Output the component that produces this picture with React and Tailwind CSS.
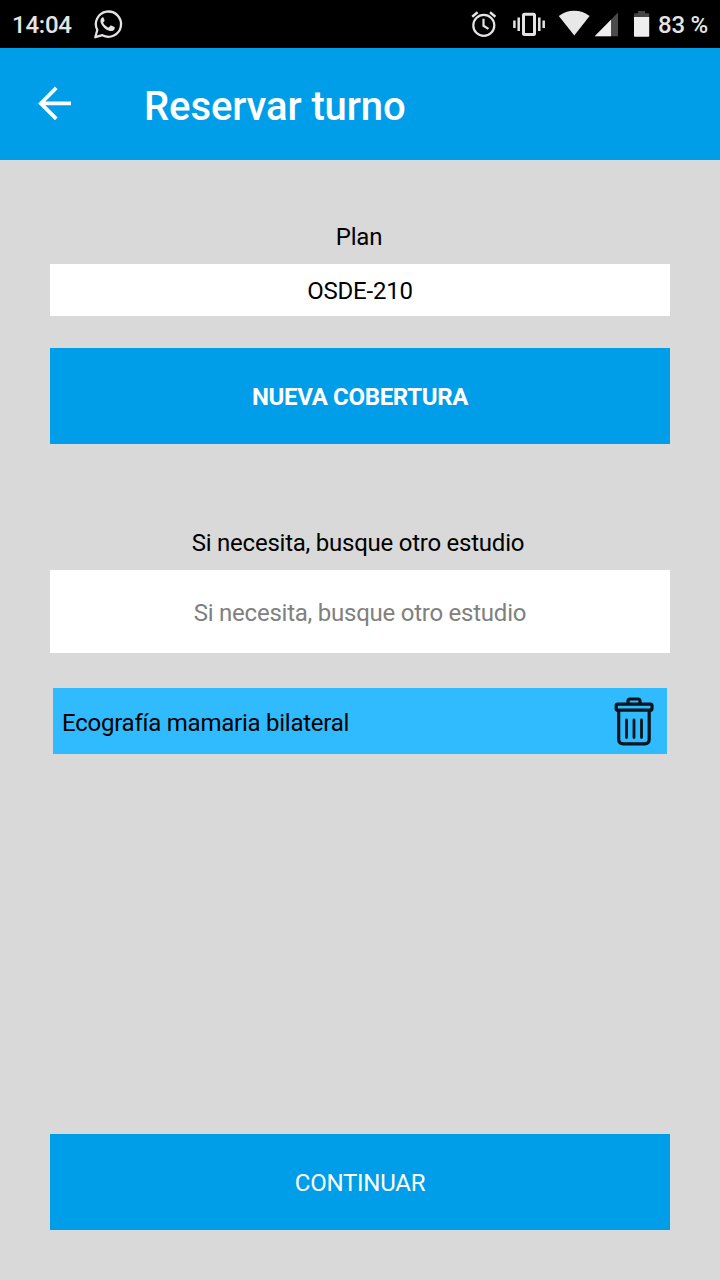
function WhatsAppIcon() {
  return (
    <svg className="ml-5 h-8 w-8 shrink-0" viewBox="92 8 32 32" fill="none">
      <path d="M95.3 37.2 97.3 30A12.6 12.6 0 1 1 102.4 35.2Z" stroke="#e4e4e4" strokeWidth="2.3" strokeLinejoin="round" />
      <path d="M103.4 17.5c-.5-.4-1.3-.2-1.8.4-1.2 1.3-1.5 3.1-.7 5.1 1.6 4 5.2 7.1 9.1 8 2.5.5 4.6-.9 4.8-3.1 0-.4-.2-.7-.5-.9l-3-1.5c-.4-.2-.8-.1-1 .2l-1.3 1.6c-.3.3-.6.3-1 .1-2-.9-3.6-2.3-4.7-4.3-.2-.4-.2-.6.1-.9l1-1.3c.2-.3.2-.6.1-.9l-1.1-2.5Z" fill="#e4e4e4" />
    </svg>
  );
}

function AlarmIcon() {
  return (
    <svg className="h-8 w-7 shrink-0" viewBox="470 8 28 32" fill="none" stroke="#e4e4e4" strokeWidth="2.2">
      <circle cx="483.8" cy="25.4" r="10.5" />
      <path d="M483.5 18.8v7l5 3.1" />
      <path d="m472.2 16.7 5.4-4.4M495.4 16.7l-5.4-4.4" strokeWidth="2.5" />
    </svg>
  );
}

function VibrateIcon() {
  return (
    <svg className="ml-3.5 h-8 w-9 shrink-0" viewBox="512 8 36 32" fill="none" stroke="#e4e4e4">
      <rect x="523.5" y="14.3" width="11" height="20.2" rx="1" strokeWidth="3" />
      <path d="M514.4 20.5v7.5M518.7 17.5v13.5M539.3 17.5v13.5M543.7 20.5v7.5" strokeWidth="2.5" />
    </svg>
  );
}

function WifiIcon() {
  return (
    <svg className="ml-2.5 h-8 w-8 shrink-0" viewBox="558 8 32 32">
      <path d="M558.8 16.1a25 25 0 0 1 30.8 0L574.3 35.5Z" fill="#e8e8e8" />
    </svg>
  );
}

function SignalIcon() {
  return (
    <svg className="ml-1 h-8 w-6 shrink-0" viewBox="594 8 24 32">
      <path d="M618 12.5V36.2h-23.3Z" fill="#4b4b4b" />
      <path d="M611 19.7V36.2h-16.3Z" fill="#eeeeee" />
    </svg>
  );
}

function BatteryIcon() {
  return (
    <svg className="ml-4 h-8 w-4 shrink-0" viewBox="634 8 16 32">
      <path d="M638 11h7v2.3h3.2q1 0 1 1V17h-15.2v-2.7q0-1 1-1h3Z" fill="#444444" />
      <path d="M634 17h15.2v19q0 .8-.8.8h-13.6q-.8 0-.8-.8Z" fill="#eeeeee" />
    </svg>
  );
}

function StatusBar() {
  return (
    <div className="flex h-12 items-center bg-black px-3 font-medium tracking-[-0.01em] text-[#e4e4e4]">
      <span className="w-15 pt-0.5 whitespace-nowrap">14:04</span>
      <WhatsAppIcon />
      <div className="ml-auto flex items-center">
        <AlarmIcon />
        <VibrateIcon />
        <WifiIcon />
        <SignalIcon />
        <BatteryIcon />
        <span className="ml-2 w-[50px] pt-0.5 whitespace-nowrap">83 %</span>
      </div>
    </div>
  );
}

function TopBar() {
  return (
    <header className="flex h-28 items-center bg-[#009ee8] pl-[37px] text-white">
      <button aria-label="Volver" className="mb-0.5 h-9 w-9">
        <svg className="h-9 w-9" viewBox="37 85 36 36" fill="none" stroke="currentColor" strokeWidth="3.7">
          <path d="M71 103.4H41M56.3 87.9 40.8 103.4 56.3 118.9" />
        </svg>
      </button>
      <h1 className="ml-[71px] pt-[5px] text-[40px] leading-none font-medium tracking-[-0.1px]">Reservar turno</h1>
    </header>
  );
}

function TrashIcon() {
  return (
    <svg className="h-[52px] w-11" viewBox="612 695 44 52" fill="none" stroke="#07141c" strokeWidth="3.2" strokeLinecap="round" strokeLinejoin="round">
      <rect x="616.2" y="704.2" width="35.8" height="6" rx="1.5" />
      <path d="M628 703.5v-2.5q0-2 2-2h8q2 0 2 2v2.5" />
      <path d="M618.7 711v28.3q0 4.5 4.5 4.5h21.5q4.5 0 4.5-4.5V711" />
      <path d="M626.5 720v17.5M634 720v17.5M641.5 720v17.5" strokeWidth="2.8" />
    </svg>
  );
}

export default function App() {
  return (
    <div className="flex h-[1280px] w-[720px] flex-col bg-[#d9d9d9] font-['Roboto',sans-serif] text-2xl text-black">
      <StatusBar />
      <TopBar />
      <main className="flex flex-1 flex-col px-[50px] pt-[61px] pb-[50px] tracking-[-0.24px]">
        <label className="pr-0.5 text-center leading-8">Plan</label>
        <div className="mt-[11px] flex h-[52px] items-center justify-center bg-white pt-0.5">OSDE-210</div>
        <button className="mt-8 h-24 bg-[#009ee8] pt-0.5 font-bold tracking-[-0.33px] text-white">NUEVA COBERTURA</button>
        <label htmlFor="study" className="mt-[83px] pr-1 text-center leading-8">Si necesita, busque otro estudio</label>
        <input
          id="study"
          className="mt-[11px] h-[83px] bg-white pt-0.5 text-center tracking-[-0.24px] outline-none placeholder:text-[#808080]"
          placeholder="Si necesita, busque otro estudio"
        />
        <div className="mx-[3px] mt-[35px] flex h-[66px] items-center justify-between bg-[#30bbff] pr-[11px] pl-[9px]">
          <span className="pt-1">Ecografía mamaria bilateral</span>
          <button aria-label="Eliminar"><TrashIcon /></button>
        </div>
        <button className="mt-auto h-24 bg-[#009ee8] pt-0.5 text-white">CONTINUAR</button>
      </main>
    </div>
  );
}
